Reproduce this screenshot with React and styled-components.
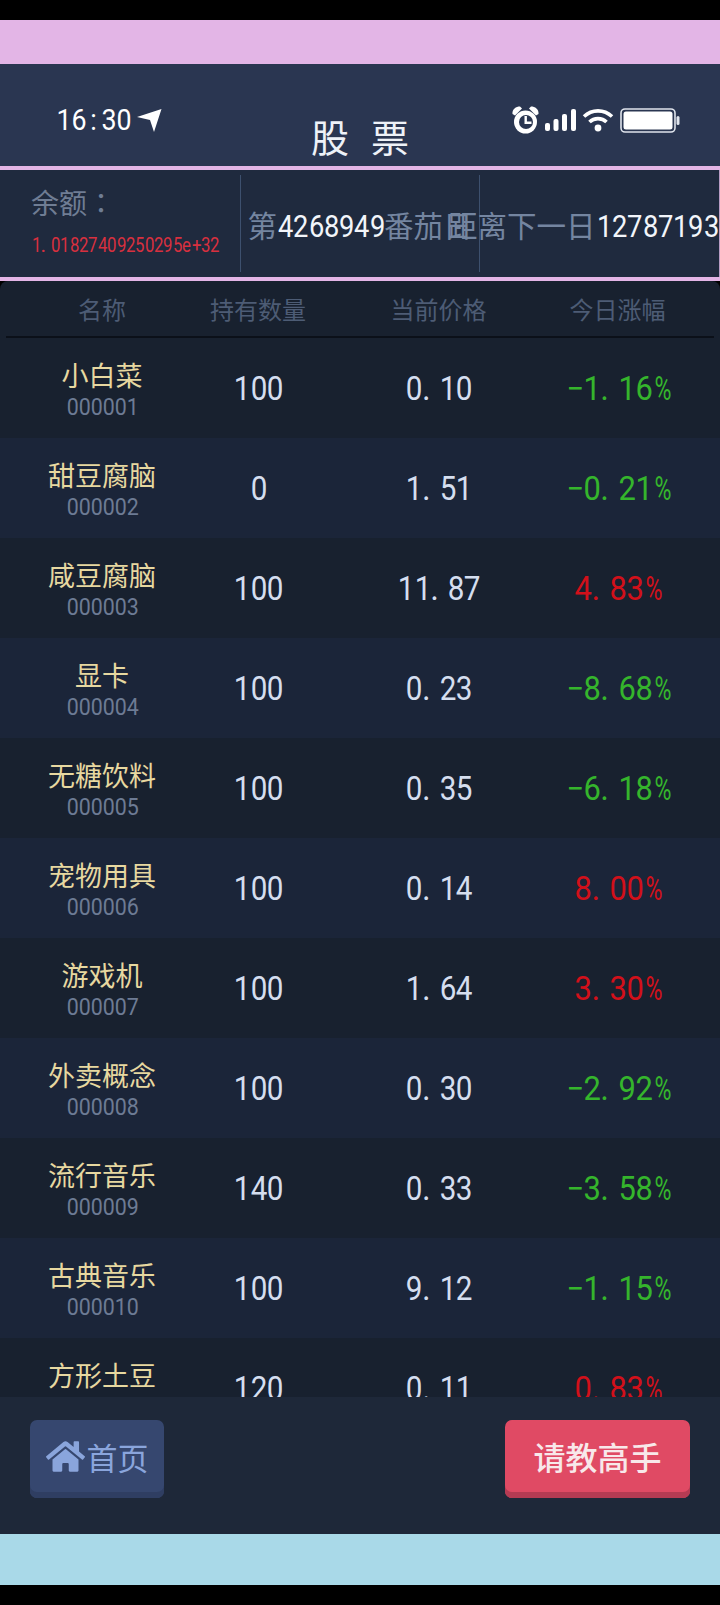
import React from 'react';
import styled, { createGlobalStyle } from 'styled-components';
import { FaHome } from 'react-icons/fa';

const stocks = [
  { name: '小白菜', code: '000001', hold: '100', price: '0.10', change: '−1.16%' },
  { name: '甜豆腐脑', code: '000002', hold: '0', price: '1.51', change: '−0.21%' },
  { name: '咸豆腐脑', code: '000003', hold: '100', price: '11.87', change: '4.83%' },
  { name: '显卡', code: '000004', hold: '100', price: '0.23', change: '−8.68%' },
  { name: '无糖饮料', code: '000005', hold: '100', price: '0.35', change: '−6.18%' },
  { name: '宠物用具', code: '000006', hold: '100', price: '0.14', change: '8.00%' },
  { name: '游戏机', code: '000007', hold: '100', price: '1.64', change: '3.30%' },
  { name: '外卖概念', code: '000008', hold: '100', price: '0.30', change: '−2.92%' },
  { name: '流行音乐', code: '000009', hold: '140', price: '0.33', change: '−3.58%' },
  { name: '古典音乐', code: '000010', hold: '100', price: '9.12', change: '−1.15%' },
  { name: '方形土豆', code: '000011', hold: '120', price: '0.11', change: '0.83%' },
];

const GlobalStyle = createGlobalStyle`
  html, body {
    margin: 0;
    padding: 0;
    background: #000;
    font-family: Roboto, "Noto Sans CJK SC", sans-serif;
  }
  * { box-sizing: border-box; }
`;

const Page = styled.div`
  width: 720px;
  height: 1605px;
  display: flex;
  flex-direction: column;
  background: #000;
  overflow: hidden;
`;

const BlackBar = styled.div`
  height: 20px;
  flex: none;
`;

const PinkBand = styled.div`
  height: ${props => props.h}px;
  flex: none;
  background: #e3b5e6;
`;

const BlueBand = styled.div`
  height: 51px;
  flex: none;
  background: #a9d9e8;
`;

const Header = styled.header`
  height: 102px;
  flex: none;
  padding: 0 40px 6px 56px;
  display: grid;
  grid-template-columns: 1fr auto 1fr;
  background: #2a3651;
  color: #fff;
`;

const Clock = styled.div`
  display: flex;
  align-items: center;
  align-self: start;
  gap: 6px;
  margin-top: 42px;
  height: 28px;
  font-size: 26px;
  white-space: nowrap;
`;

const Title = styled.h1`
  align-self: end;
  margin: 0 0 -3px;
  font-size: 38px;
  line-height: 48px;
  font-weight: 400;
  letter-spacing: 22px;
  padding-left: 6px;
  color: #eef2f8;
`;

const StatusIcons = styled.div`
  display: flex;
  justify-content: flex-end;
  align-items: center;
  align-self: start;
  gap: 6px;
  margin-top: 42px;
  height: 28px;
`;

const InfoBar = styled.section`
  height: 107px;
  flex: none;
  display: grid;
  grid-template-columns: 240px 239px 1fr;
  padding: 5px 1px 5px 0;
  background: #1f2a3e;
  border-right: 1px solid #b89cc4;
`;

const InfoCell = styled.div`
  display: flex;
  min-width: 0;
  flex-direction: ${props => (props.$stack ? 'column' : 'row')};
  align-items: ${props => (props.$stack ? 'flex-start' : 'center')};
  justify-content: ${props => (props.$stack ? 'flex-start' : props.$end ? 'flex-end' : 'center')};
  padding-left: ${props => (props.$stack ? 31 : 0)}px;
  padding-top: ${props => (props.$stack ? 0 : 6)}px;
  border-left: ${props => (props.$stack ? 'none' : '1px solid #3d506e')};
  white-space: nowrap;
`;

const BalanceLabel = styled.div`
  font-family: "Noto Sans CJK TC", sans-serif;
  font-size: 28px;
  line-height: 40px;
  margin-top: 7px;
  color: #6f7d94;
`;

const BalanceValue = styled.div`
  margin-top: 11px;
  line-height: 24px;
  color: #d8303f;
`;

const InfoText = styled.span`
  font-size: 29.5px;
  color: #7485a0;
  line-height: 40px;
`;

const InfoNumber = styled.span`
  color: #f2f5fa;
`;

const Market = styled.main`
  flex: 1;
  min-height: 0;
  overflow: hidden;
  background: #18212f;
  border-radius: 8px 8px 0 0;
`;

const ColumnRow = styled.div`
  display: grid;
  grid-template-columns: 204px 108px 253px 105px;
  justify-items: center;
  align-items: center;
  white-space: nowrap;
`;

const LabelRow = styled(ColumnRow)`
  height: 57px;
  padding-bottom: 2px;
  font-size: 24px;
  color: #4d5c75;
  position: relative;

  &::after {
    content: '';
    position: absolute;
    left: 6px;
    right: 6px;
    bottom: 0;
    height: 2px;
    background: #0b1019;
  }
`;

const StockRow = styled(ColumnRow)`
  height: 100px;
  background: ${props => (props.$alt ? '#1b2539' : '#18212f')};
`;

const NameCell = styled.div`
  display: flex;
  flex-direction: column;
  align-items: center;
  padding-top: 4px;
`;

const StockName = styled.div`
  font-size: 27px;
  line-height: 36px;
  color: #e7d8a0;
`;

const StockCode = styled.div`
  line-height: 25px;
  color: #6d7b94;
`;

const Value = styled.div`
  color: ${props => props.$color || '#d5deef'};
`;

const Footer = styled.footer`
  height: 137px;
  flex: none;
  display: flex;
  justify-content: space-between;
  align-items: flex-start;
  padding: 23px 30px 0;
  background: #1e2839;
`;

const PushButton = styled.button`
  height: 78px;
  padding: 0 0 6px;
  display: flex;
  align-items: center;
  justify-content: center;
  gap: 2px;
  width: ${props => props.$w}px;
  border: none;
  border-radius: 7px;
  font-family: inherit;
  font-size: ${props => props.$size}px;
  font-weight: ${props => props.$weight || 400};
  background: ${props => props.$bg};
  color: ${props => props.$fg};
  box-shadow: inset 0 -6px 0 ${props => props.$edge};
`;

const GlyphBox = styled.span`
  display: inline-block;
  width: ${props => props.$cell}px;
  text-align: ${props => (props.$dot ? 'left' : 'center')};
  transform: scaleX(${props => (props.$dot ? 1 : props.$squeeze)});
  white-space: pre;
`;

const TextLine = styled.span`
  font-size: ${props => props.$size}px;
  white-space: nowrap;
  display: inline-block;
`;

const Tabular = ({ text, size, cell }) => {
  const squeeze = Math.min(1, cell / (0.56 * size));

  return (
    <TextLine $size={size}>
      {[...text].map((ch, i) => (
        <GlyphBox
          key={i}
          $cell={cell}
          $dot={ch === '.'}
          $squeeze={ch === '%' ? squeeze * 0.75 : squeeze}
        >
          {ch}
        </GlyphBox>
      ))}
    </TextLine>
  );
};

const LocationArrow = () => (
  <svg width="25" height="23" viewBox="0 0 25 23">
    <path d="M24.5 0 L0 8 L13 11 L17 23 Z" fill="#fff" />
  </svg>
);

const AlarmIcon = () => (
  <svg width="27" height="28" viewBox="0 0 27 28">
    <circle cx="13.5" cy="16" r="11.5" fill="#fff" />
    <circle cx="14" cy="16" r="7" fill="#2a3651" />
    <path d="M12.5 10 h2.4 v5.6 h4.6 v2.4 h-7 Z" fill="#fff" />
    <path d="M0.5 8 C0 3 4 0.5 8 0.5 L10 2.5 L3 9.5 Z M26.5 8 C27 3 23 0.5 19 0.5 L17 2.5 L24 9.5 Z" fill="#fff" />
  </svg>
);

const SignalIcon = () => (
  <svg width="31" height="22" viewBox="0 0 31 22">
    <rect x="0" y="14" width="5" height="8" rx="2" fill="#fff" />
    <rect x="8.5" y="10" width="5" height="12" rx="2" fill="#fff" />
    <rect x="17" y="5" width="5" height="17" rx="2" fill="#fff" />
    <rect x="26" y="0" width="5" height="22" rx="2" fill="#fff" />
  </svg>
);

const WifiIcon = () => (
  <svg width="32" height="24" viewBox="0 0 32 24" fill="none" stroke="#fff" strokeWidth="3.6">
    <path d="M2 8.5 C10 1 22 1 30 8.5" />
    <path d="M7.5 14 C12 9.5 20 9.5 24.5 14" />
    <circle cx="16" cy="20" r="3.4" fill="#fff" stroke="none" />
  </svg>
);

const BatteryIcon = () => (
  <svg width="60" height="25" viewBox="0 0 60 25">
    <rect x="1" y="1" width="54" height="23" rx="4" fill="none" stroke="#dfe4ec" strokeWidth="1.6" />
    <rect x="3.5" y="3.5" width="49" height="18" rx="2.5" fill="#fff" />
    <rect x="56.5" y="8" width="3" height="9" rx="1.5" fill="#dfe4ec" />
  </svg>
);

const isFalling = change => change.startsWith('−');

const App = () => (
  <Page>
    <GlobalStyle />
    <BlackBar />
    <PinkBand h={44} />
    <Header>
      <Clock>
        <Tabular text="16:30" size={29} cell={15} />
        <LocationArrow />
      </Clock>
      <Title>股票</Title>
      <StatusIcons>
        <AlarmIcon />
        <SignalIcon />
        <WifiIcon />
        <BatteryIcon />
      </StatusIcons>
    </Header>
    <PinkBand h={4} />
    <InfoBar>
      <InfoCell $stack>
        <BalanceLabel>余额：</BalanceLabel>
        <BalanceValue>
          <Tabular text="1.01827409250295e+32" size={21} cell={9.4} />
        </BalanceValue>
      </InfoCell>
      <InfoCell>
        <InfoText>
          第<InfoNumber><Tabular text="4268949" size={31} cell={15.3} /></InfoNumber>番茄日
        </InfoText>
      </InfoCell>
      <InfoCell $end>
        <InfoText>
          距离下一日<InfoNumber><Tabular text="12787193" size={31} cell={15.3} /></InfoNumber>
        </InfoText>
      </InfoCell>
    </InfoBar>
    <PinkBand h={4} />
    <Market>
      <LabelRow>
        <span>名称</span>
        <span>持有数量</span>
        <span>当前价格</span>
        <span>今日涨幅</span>
      </LabelRow>
      {stocks.map((stock, i) => (
        <StockRow key={stock.code} $alt={i % 2 === 1}>
          <NameCell>
            <StockName>{stock.name}</StockName>
            <StockCode>
              <Tabular text={stock.code} size={24} cell={12} />
            </StockCode>
          </NameCell>
          <Value>
            <Tabular text={stock.hold} size={33} cell={16.6} />
          </Value>
          <Value>
            <Tabular text={stock.price} size={33} cell={16.6} />
          </Value>
          <Value $color={isFalling(stock.change) ? '#35b52c' : '#d2101a'}>
            <Tabular text={stock.change} size={33} cell={17.3} />
          </Value>
        </StockRow>
      ))}
    </Market>
    <Footer>
      <PushButton $w={134} $size={31} $bg="#36476f" $edge="#2f3e62" $fg="#8aa5dc">
        <FaHome size={39} />
        首页
      </PushButton>
      <PushButton $w={185} $size={32} $weight={500} $bg="#e04a64" $edge="#b53b53" $fg="#f8e8ea">
        请教高手
      </PushButton>
    </Footer>
    <BlueBand />
    <BlackBar />
  </Page>
);

export default App;
